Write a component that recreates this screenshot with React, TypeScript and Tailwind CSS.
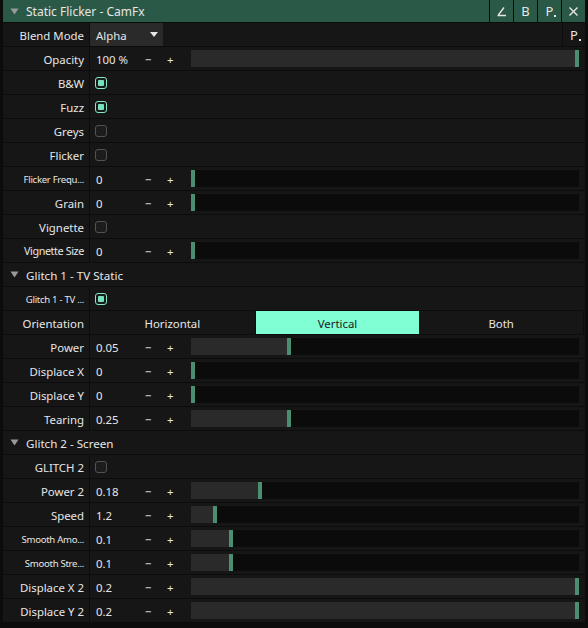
import React from 'react'

// ─── Static Flicker effect panel ──────────────────────────────────────────────

type Row =
  | { kind: 'slider'; label: string; value: string; pos: number; small?: boolean; tight?: boolean }
  | { kind: 'check'; label: string; on: boolean; small?: boolean }
  | { kind: 'section'; label: string }
  | { kind: 'blend' }
  | { kind: 'orient' }

const rows: Row[] = [
  { kind: 'blend' },
  { kind: 'slider', label: 'Opacity', value: '100 %', pos: 1 },
  { kind: 'check', label: 'B&W', on: true },
  { kind: 'check', label: 'Fuzz', on: true },
  { kind: 'check', label: 'Greys', on: false },
  { kind: 'check', label: 'Flicker', on: false },
  { kind: 'slider', label: 'Flicker Frequ...', value: '0', pos: 0, small: true },
  { kind: 'slider', label: 'Grain', value: '0', pos: 0 },
  { kind: 'check', label: 'Vignette', on: false },
  { kind: 'slider', label: 'Vignette Size', value: '0', pos: 0, tight: true },
  { kind: 'section', label: 'Glitch 1 - TV Static' },
  { kind: 'check', label: 'Glitch 1 - TV ...', on: true, small: true },
  { kind: 'orient' },
  { kind: 'slider', label: 'Power', value: '0.05', pos: 0.25 },
  { kind: 'slider', label: 'Displace X', value: '0', pos: 0 },
  { kind: 'slider', label: 'Displace Y', value: '0', pos: 0 },
  { kind: 'slider', label: 'Tearing', value: '0.25', pos: 0.25 },
  { kind: 'section', label: 'Glitch 2 - Screen' },
  { kind: 'check', label: 'GLITCH 2', on: false },
  { kind: 'slider', label: 'Power 2', value: '0.18', pos: 0.175 },
  { kind: 'slider', label: 'Speed', value: '1.2', pos: 0.057 },
  { kind: 'slider', label: 'Smooth Amo...', value: '0.1', pos: 0.1, small: true },
  { kind: 'slider', label: 'Smooth Stre...', value: '0.1', pos: 0.1, small: true },
  { kind: 'slider', label: 'Displace X 2', value: '0.2', pos: 1 },
  { kind: 'slider', label: 'Displace Y 2', value: '0.2', pos: 1 },
]

export default function App() {
  return (
    <div className="w-[588px] h-[628px] overflow-hidden bg-[#0c0c0c] pl-[3px] pr-[3px] text-[11.4px] text-[#e6e6e6] font-['Noto_Sans',sans-serif] leading-none">
      {/* Title bar */}
      <div className="flex h-[23px] items-stretch bg-[#2b5947] border-b border-[#0c0c0c]">
        <div className="flex flex-1 items-center">
          <Tri />
          <span className="ml-[7px] pt-[1px] text-[12px]">Static Flicker - CamFx</span>
        </div>
        <HeadBtn>
          <svg width="11" height="11" viewBox="0 0 11 11" fill="none" stroke="#e6e6e6" strokeWidth="1.3">
            <path d="M8 1.5 L2 9.5 M1.5 9.5 H10" />
          </svg>
        </HeadBtn>
        <HeadBtn>
          <span className="text-[13px] pt-[1px]">B</span>
        </HeadBtn>
        <HeadBtn>
          <PDot />
        </HeadBtn>
        <HeadBtn>
          <svg width="11" height="11" viewBox="0 0 11 11" fill="none" stroke="#e6e6e6" strokeWidth="1.4">
            <path d="M1.5 1.5 L9.5 9.5 M9.5 1.5 L1.5 9.5" />
          </svg>
        </HeadBtn>
      </div>

      {rows.map((r, i) => (
        <RowView key={i} row={r} />
      ))}
    </div>
  )
}

function Tri() {
  return (
    <svg width="9" height="7" viewBox="0 0 9 7" className="ml-[7px]">
      <path d="M0.5 0.5 H8.5 L4.5 6.5 Z" fill="#9a9a9a" />
    </svg>
  )
}

function PDot() {
  return (
    <span className="relative pt-[1px] text-[13px]">
      P<span className="absolute -right-[3px] bottom-[1px] h-[2px] w-[2px] bg-[#e6e6e6]" />
    </span>
  )
}

function HeadBtn({ children }: { children: React.ReactNode }) {
  return (
    <div className="flex w-[24px] items-center justify-center border-l border-[#0c0c0c]">{children}</div>
  )
}

// ─── Rows ─────────────────────────────────────────────────────────────────────

function RowView({ row }: { row: Row }) {
  if (row.kind === 'section') {
    return (
      <div className="flex h-[24px] items-center bg-[#161616] border-b border-[#0c0c0c]">
        <Tri />
        <span className="ml-[7px] pt-[2px] text-[11.6px]">{row.label}</span>
      </div>
    )
  }

  const label =
    row.kind === 'blend' ? 'Blend Mode' : row.kind === 'orient' ? 'Orientation' : row.label
  const small = (row.kind === 'slider' || row.kind === 'check') && row.small
  const tight = row.kind === 'slider' && row.tight

  return (
    <div className="flex h-[24px] bg-[#161616] border-b border-[#0c0c0c]">
      <div className="flex w-[87px] shrink-0 items-center justify-end pr-[5px] pt-[2px] border-r border-[#0c0c0c]">
        <span
          className={
            small
              ? 'text-[9.6px] tracking-[-0.3px] whitespace-nowrap'
              : tight
                ? 'text-[10.8px] tracking-[-0.4px] whitespace-nowrap'
                : 'whitespace-nowrap'
          }
        >
          {label}
        </span>
      </div>

      {row.kind === 'blend' && (
        <div className="flex flex-1 items-stretch">
          <div className="flex w-[73px] items-center justify-between bg-[#2a2a2a] pl-[6px] pr-[5px]">
            <span className="pt-[2px]">Alpha</span>
            <svg width="8" height="5" viewBox="0 0 8 5">
              <path d="M0 0 H8 L4 5 Z" fill="#e6e6e6" />
            </svg>
          </div>
          <div className="flex-1" />
          <div className="flex w-[23px] items-center justify-center border-l border-[#0c0c0c]">
            <PDot />
          </div>
        </div>
      )}

      {row.kind === 'check' && (
        <div className="flex flex-1 items-center pl-[5px] pt-[1px]">
          <Check on={row.on} />
        </div>
      )}

      {row.kind === 'orient' && (
        <div className="grid flex-1 grid-cols-3 pr-[1px]">
          <div className="flex items-center justify-center pt-[2px]">Horizontal</div>
          <div className="flex items-center justify-center bg-[#80ffd4] pt-[2px] text-[#1a1a1a] border-l border-[#0c0c0c]">
            Vertical
          </div>
          <div className="flex items-center justify-center pt-[2px] border-r border-[#0c0c0c]">Both</div>
        </div>
      )}

      {row.kind === 'slider' && (
        <div className="flex flex-1 items-center pl-[6px] pr-[6px]">
          <span className="w-[49px] pt-[2px]">{row.value}</span>
          <span className="w-[22px] pt-[2px]">−</span>
          <span className="w-[24px] pt-[2px]">+</span>
          <Slider pos={row.pos} />
        </div>
      )}
    </div>
  )
}

function Check({ on }: { on: boolean }) {
  if (on) {
    return (
      <div className="flex h-[12px] w-[12px] items-center justify-center rounded-[3px] border-[1.5px] border-[#85e6c4] bg-[#1a1a1a]">
        <div className="h-[6px] w-[6px] rounded-[1px] bg-[#74e3bd]" />
      </div>
    )
  }
  return <div className="h-[12px] w-[12px] rounded-[3px] border-[1.5px] border-[#525252] bg-[#1c1c1c]" />
}

function Slider({ pos }: { pos: number }) {
  return (
    <div className="flex h-[17px] flex-1 bg-[#0b0b0b]">
      <div className="bg-[#2a2a2a]" style={{ width: `calc((100% - 4px) * ${pos})` }} />
      <div className="w-[4px] bg-[#4b8f73]" />
    </div>
  )
}
